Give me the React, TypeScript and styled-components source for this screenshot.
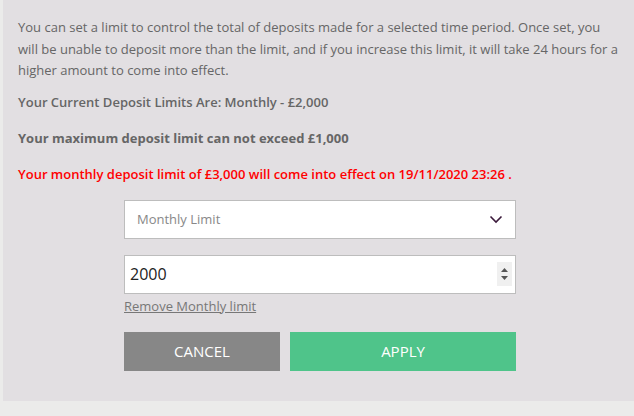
import styled, { createGlobalStyle } from 'styled-components'

const GlobalStyle = createGlobalStyle`
  html, body {
    margin: 0;
    padding: 0;
    background: #ebebea;
    font-family: 'Open Sans', 'Liberation Sans', sans-serif;
  }
`

const Page = styled.div`
  width: 634px;
  height: 416px;
  display: flex;
  flex-direction: column;
  background: #ebebea;
`

const Panel = styled.div`
  margin-left: 3px;
  height: 401px;
  box-sizing: border-box;
  background: #e2dfe2;
  padding: 17px 12px 0 15px;
  display: flex;
  flex-direction: column;
`

const Intro = styled.p`
  margin: 0;
  font-size: 13px;
  line-height: 21.5px;
  color: #666;
`

const Note = styled.p<{ $weight?: number; $color?: string; $gap: number }>`
  margin: ${(p) => p.$gap}px 0 0;
  font-size: 13px;
  line-height: 18px;
  font-weight: ${(p) => p.$weight ?? 600};
  color: ${(p) => p.$color ?? '#666'};
`

const Form = styled.div`
  width: 392px;
  margin: 17px 0 0 106px;
  display: flex;
  flex-direction: column;
`

const SelectBox = styled.div`
  height: 39px;
  box-sizing: border-box;
  background: #fff;
  border: 1px solid #bdbdbd;
  display: flex;
  align-items: center;
  justify-content: space-between;
  padding: 0 12px 0 12px;
  font-size: 13px;
  color: #888;
`

const NumberBox = styled.div`
  margin-top: 16px;
  height: 39px;
  box-sizing: border-box;
  background: #fff;
  border: 1px solid #bdbdbd;
  display: flex;
  align-items: center;
  justify-content: space-between;
  padding: 0 3px 0 5px;
  font-size: 16px;
  color: #222;
`

const Spinner = styled.div`
  width: 15px;
  height: 24px;
  background: #f0f0f0;
  display: flex;
  flex-direction: column;
  align-items: center;
  justify-content: center;
  gap: 4px;
`

const RemoveLink = styled.a`
  margin-top: 3px;
  font-size: 13px;
  line-height: 18px;
  color: #777;
  text-decoration: underline;
  align-self: flex-start;
`

const Buttons = styled.div`
  margin-top: 17px;
  display: flex;
  gap: 10px;
`

const Button = styled.button<{ $bg: string; $grow?: boolean }>`
  height: 39px;
  width: ${(p) => (p.$grow ? 'auto' : '156px')};
  flex: ${(p) => (p.$grow ? 1 : 'none')};
  border: none;
  background: ${(p) => p.$bg};
  color: #fff;
  font-family: 'Open Sans', 'Liberation Sans', sans-serif;
  font-size: 15px;
  text-transform: uppercase;
  padding: 0;
`

const Chevron = () => (
  <svg width="14" height="9" viewBox="0 0 14 9">
    <path d="M1.5 1.5 L7 7 L12.5 1.5" fill="none" stroke="#3b1a3b" strokeWidth="1.6" />
  </svg>
)

export default function App() {
  return (
    <>
      <GlobalStyle />
      <Page>
        <Panel>
          <Intro>
            You can set a limit to control the total of deposits made for a selected time period. Once set, you
            will be unable to deposit more than the limit, and if you increase this limit, it will take 24 hours for a
            higher amount to come into effect.
          </Intro>
          <Note $gap={11}>Your Current Deposit Limits Are: Monthly - £2,000</Note>
          <Note $gap={18} $weight={700}>Your maximum deposit limit can not exceed £1,000</Note>
          <Note $gap={18} $color="#f00">
            Your monthly deposit limit of £3,000 will come into effect on 19/11/2020 23:26 .
          </Note>
          <Form>
            <SelectBox>
              <span>Monthly Limit</span>
              <Chevron />
            </SelectBox>
            <NumberBox>
              <span>2000</span>
              <Spinner>
                <svg width="7" height="4" viewBox="0 0 7 4">
                  <path d="M0 4 L3.5 0 L7 4 Z" fill="#555" />
                </svg>
                <svg width="7" height="4" viewBox="0 0 7 4">
                  <path d="M0 0 L3.5 4 L7 0 Z" fill="#555" />
                </svg>
              </Spinner>
            </NumberBox>
            <RemoveLink>Remove Monthly limit</RemoveLink>
            <Buttons>
              <Button $bg="#878787">Cancel</Button>
              <Button $bg="#4fc48a" $grow>Apply</Button>
            </Buttons>
          </Form>
        </Panel>
      </Page>
    </>
  )
}
